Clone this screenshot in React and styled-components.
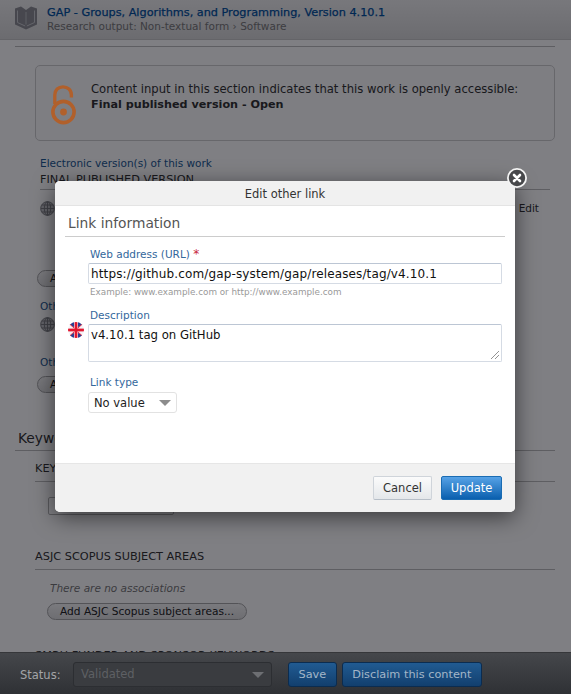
import React from "react";
import styled, { createGlobalStyle } from "styled-components";

const Global = createGlobalStyle`
  html, body { margin: 0; padding: 0; height: 100%; }
  body { font-family: "DejaVu Sans", "Liberation Sans", sans-serif; background: #fff; overflow: hidden; }
  * { box-sizing: border-box; }
`;

const BookIcon = () => (
  <svg width="22" height="24" viewBox="0 0 22 24">
    <path fill="#8e8f94" d="M0 2.5 L6 0.5 L11 4 L16 0.5 L22 2.5 V18.5 L11 23.5 L0 18.5 Z" />
    <path fill="none" stroke="#c9cace" strokeWidth="1" d="M2.5 4.5 L2.5 16.5 L10.2 20 M19.5 4.5 V16.5 L11.8 20" />
    <path fill="none" stroke="#c9cace" strokeWidth="0.8" d="M11 6 V18.5" />
  </svg>
);

const OpenAccessIcon = () => (
  <svg width="25" height="40" viewBox="0 0 25 40">
    <path fill="none" stroke="#b1602b" strokeWidth="3.3" d="M3.8 19 V10 C3.8 5 7.3 1.8 12 1.8 C16.7 1.8 20.4 5 20.4 10 V12.4" />
    <circle cx="12.5" cy="27" r="10.6" fill="none" stroke="#b1602b" strokeWidth="3.6" />
    <circle cx="12.5" cy="27" r="3.4" fill="#b1602b" />
  </svg>
);

const GlobeIcon = () => (
  <svg width="15" height="15" viewBox="0 0 16 16" fill="none" stroke="#7c7d81" strokeWidth="1">
    <circle cx="8" cy="8" r="7.3" fill="#c4c5c8" />
    <ellipse cx="8" cy="8" rx="3.4" ry="7.3" />
    <path d="M1 8 H15 M2 4.3 H14 M2 11.7 H14 M8 1 V15" />
  </svg>
);

const UkFlag = () => (
  <svg width="16" height="16" viewBox="0 0 16 16">
    <clipPath id="flagDisc"><circle cx="8" cy="8" r="8" /></clipPath>
    <g clipPath="url(#flagDisc)">
      <rect width="16" height="16" fill="#f4f4f8" />
      <path fill="#2b3f92" d="M2 2.6 L6 5.2 V0 H4 Z M14 2.6 L10 5.2 V0 H12 Z M2 13.4 L6 10.8 V16 H4 Z M14 13.4 L10 10.8 V16 H12 Z" />
      <path stroke="#e3172f" strokeWidth="0.9" d="M1 1.5 L6 6 M15 1.5 L10 6 M1 14.5 L6 10 M15 14.5 L10 10" />
      <rect x="6.6" width="2.8" height="16" fill="#e3172f" />
      <rect y="6.6" width="16" height="2.8" fill="#e3172f" />
    </g>
  </svg>
);

const CloseIcon = () => (
  <svg width="20" height="20" viewBox="0 0 20 20">
    <circle cx="10" cy="10" r="9.1" fill="#47484b" stroke="#f4f4f4" strokeWidth="1.8" />
    <path stroke="#fff" strokeWidth="2.6" strokeLinecap="round" d="M7 7 L13 13 M13 7 L7 13" />
  </svg>
);

const App = () => (
  <Page>
    <Global />
    <TopBar>
      <BookIcon />
      <TitleBlock>
        <Title>GAP - Groups, Algorithms, and Programming, Version 4.10.1</Title>
        <Subtitle>Research output: Non-textual form › Software</Subtitle>
      </TitleBlock>
    </TopBar>
    <Content>
      <TopRule />
      <Notice>
        <OpenAccessMark>
          <OpenAccessIcon />
        </OpenAccessMark>
        <NoticeText>
          Content input in this section indicates that this work is openly accessible:
          <strong>Final published version - Open</strong>
        </NoticeText>
      </Notice>
      <Section>
        <BlueLabel $mt={15}>Electronic version(s) of this work</BlueLabel>
        <Heading $mt={3} $pb={2} $inset={5}>FINAL PUBLISHED VERSION</Heading>
        <LinkRow $mt={10}>
          <GlobeIcon />
          <EditLink>Edit</EditLink>
        </LinkRow>
        <OutlineButton $mt={54}>Add electronic version...</OutlineButton>
        <BlueLabel $mt={12}>Other link(s)</BlueLabel>
        <LinkRow $mt={3}>
          <GlobeIcon />
        </LinkRow>
        <BlueLabel $mt={23}>Other files</BlueLabel>
        <OutlineButton $mt={7}>Add file...</OutlineButton>
      </Section>
      <KeywordsTitle>Keywords</KeywordsTitle>
      <Section>
        <Heading $mt={11} $inset={0}>KEYWORDS</Heading>
        <KeywordInput />
        <Heading $mt={35} $inset={0}>ASJC SCOPUS SUBJECT AREAS</Heading>
        <Empty>There are no associations</Empty>
        <OutlineButton $ml={12} $mt={8}>Add ASJC Scopus subject areas...</OutlineButton>
        <Heading $mt={29} $inset={0}>SMRU FUNDER AND SPONSOR KEYWORDS</Heading>
      </Section>
    </Content>

    <StatusBar>
      <StatusLabel>Status:</StatusLabel>
      <StatusSelect>
        Validated
        <Caret $color="#6d6f73" $right={7} />
      </StatusSelect>
      <BarButton>Save</BarButton>
      <BarButton>Disclaim this content</BarButton>
    </StatusBar>

    <Overlay />

    <Dialog>
      <CloseButton>
        <CloseIcon />
      </CloseButton>
      <DialogHeader>Edit other link</DialogHeader>
      <DialogBody>
        <BodyTitle>Link information</BodyTitle>
        <Field>
          <FieldLabel>
            Web address (URL) <Required>*</Required>
          </FieldLabel>
          <UrlBox>https://github.com/gap-system/gap/releases/tag/v4.10.1</UrlBox>
          <Hint>Example: www.example.com or http://www.example.com</Hint>
        </Field>
        <Field $mt={10}>
          <FieldLabel>Description</FieldLabel>
          <FlagSpot>
            <UkFlag />
          </FlagSpot>
          <DescriptionBox>
            v4.10.1 tag on GitHub
            <Grip viewBox="0 0 8 8" width="8" height="8">
              <path stroke="#777" strokeWidth="0.8" d="M0 8 L8 0 M4 8 L8 4" />
            </Grip>
          </DescriptionBox>
        </Field>
        <Field $mt={13}>
          <FieldLabel>Link type</FieldLabel>
          <TypeSelect>
            No value
            <Caret $color="#8c8c8c" $right={5} />
          </TypeSelect>
        </Field>
      </DialogBody>
      <DialogFooter>
        <CancelButton>Cancel</CancelButton>
        <UpdateButton>Update</UpdateButton>
      </DialogFooter>
    </Dialog>
  </Page>
);

const Page = styled.div`
  position: relative;
  width: 571px;
  height: 694px;
  overflow: hidden;
  background: #fff;
`;

const TopBar = styled.header`
  height: 40px;
  padding: 6px 0 0 15px;
  display: flex;
  align-items: flex-start;
  gap: 10px;
  background: linear-gradient(#f0f0f0, #d8d8d8);
  border-bottom: 1px solid #c8c8c8;
`;

const TitleBlock = styled.div`
  display: flex;
  flex-direction: column;
`;

const Title = styled.div`
  font-size: 11.25px;
  line-height: 14px;
  color: #00509e;
  -webkit-text-stroke: 0.25px #00509e;
  white-space: nowrap;
`;

const Subtitle = styled.div`
  font-size: 10.5px;
  line-height: 13px;
  color: #7a7a7a;
  white-space: nowrap;
`;

const Content = styled.main`
  padding-left: 15px;
`;

const TopRule = styled.div`
  height: 1px;
  margin-top: 6px;
  width: 540px;
  background: #bdbdbd;
`;

const Notice = styled.div`
  margin: 18px 0 0 20px;
  width: 520px;
  height: 76px;
  padding: 0 0 0 15px;
  display: flex;
  align-items: center;
  gap: 15px;
  background: #fcfcfc;
  border: 1px solid #cfcfcf;
  border-radius: 5px;
`;

const OpenAccessMark = styled.span`
  position: relative;
  z-index: 2;
  display: flex;
  margin-top: 3px;
`;

const NoticeText = styled.div`
  font-size: 11.6px;
  line-height: 15px;
  color: #333;
  margin-top: -13px;
  white-space: nowrap;
  strong {
    display: block;
    font-size: 11.2px;
    font-weight: 700;
  }
`;

const Section = styled.section`
  margin-left: 20px;
  width: 520px;
`;

const BlueLabel = styled.div`
  margin-top: ${(p) => p.$mt}px;
  margin-left: 5px;
  font-size: 10.5px;
  line-height: 14px;
  color: #1d5a92;
`;

const Heading = styled.div`
  margin: ${(p) => p.$mt}px ${(p) => p.$inset}px 0;
  padding-bottom: ${(p) => p.$pb ?? 5}px;
  font-size: 11.3px;
  line-height: 14px;
  color: #333;
  border-bottom: 1px solid #bdbdbd;
  white-space: nowrap;
`;

const LinkRow = styled.div`
  margin-top: ${(p) => p.$mt}px;
  padding: 0 16px 0 5px;
  display: flex;
  align-items: center;
  justify-content: space-between;
  height: 16px;
`;

const EditLink = styled.span`
  font-size: 10.5px;
  color: #333;
`;

const OutlineButton = styled.div`
  width: fit-content;
  margin-top: ${(p) => p.$mt}px;
  margin-left: ${(p) => p.$ml ?? 2}px;
  padding: 0 12px;
  height: 17px;
  line-height: 15px;
  font-size: 10.6px;
  color: #222;
  border: 1px solid #a6a6a6;
  border-radius: 9px;
  background: linear-gradient(#f4f4f4, #dcdcdc);
  white-space: nowrap;
`;

const KeywordsTitle = styled.h2`
  margin: 36px 0 0;
  width: 540px;
  padding: 0 0 3px 3px;
  font-size: 13.8px;
  line-height: 18px;
  font-weight: 400;
  color: #333;
  border-bottom: 1px solid #bdbdbd;
`;

const KeywordInput = styled.div`
  width: 126px;
  height: 18px;
  margin: 15px 0 0 13px;
  border: 1px solid #b5b5b5;
  border-radius: 2px;
  background: #fff;
`;

const Empty = styled.div`
  margin: 12px 0 0 15px;
  font-size: 10.5px;
  line-height: 13px;
  font-style: italic;
  color: #777;
`;

const StatusBar = styled.footer`
  position: absolute;
  z-index: 2;
  left: 0;
  right: 0;
  bottom: 0;
  height: 42px;
  padding: 9px 0 0 20px;
  display: flex;
  align-items: flex-start;
  background: linear-gradient(#45474b, #2f3135);
  border-top: 1px solid #36373a;
`;

const StatusLabel = styled.span`
  font-size: 11.5px;
  line-height: 26px;
  color: #a3a4a7;
  width: 53px;
`;

const StatusSelect = styled.div`
  position: relative;
  width: 199px;
  height: 25px;
  padding-left: 7px;
  margin-right: 16px;
  font-size: 11.5px;
  line-height: 23px;
  color: #5e6064;
  background: #3a3c40;
  border: 1px solid #2c2e32;
  border-radius: 3px;
`;

const Caret = styled.span`
  position: absolute;
  right: ${(p) => p.$right}px;
  top: 50%;
  margin-top: -3px;
  width: 0;
  height: 0;
  border-left: 6px solid transparent;
  border-right: 6px solid transparent;
  border-top: 6px solid ${(p) => p.$color};
`;

const BarButton = styled.div`
  height: 25px;
  margin-right: 5px;
  padding: 0 9.5px;
  font-size: 11.3px;
  line-height: 23px;
  color: #a3b6c8;
  border: 1px solid #0b2c50;
  border-radius: 3px;
  background: linear-gradient(#215b92, #123f6e);
  white-space: nowrap;
`;

const Overlay = styled.div`
  position: absolute;
  inset: 0;
  background: rgba(0, 0, 8, 0.5);
`;

const Dialog = styled.div`
  position: absolute;
  z-index: 3;
  left: 55px;
  top: 181px;
  width: 460px;
  height: 331px;
  display: flex;
  flex-direction: column;
  background: #fff;
  border-radius: 5px;
  box-shadow: 0 5px 22px rgba(0, 0, 0, 0.55);
`;

const CloseButton = styled.div`
  position: absolute;
  top: -13px;
  right: -12px;
  width: 20px;
  height: 20px;
`;

const DialogHeader = styled.div`
  height: 25px;
  padding-top: 1px;
  font-size: 11.5px;
  line-height: 24px;
  text-align: center;
  color: #333;
  background: #f1f1f1;
  border-bottom: 1px solid #e4e4e4;
  border-radius: 5px 5px 0 0;
`;

const DialogBody = styled.div`
  flex: 1;
  padding: 8px 10px 0 10px;
`;

const BodyTitle = styled.h3`
  margin: 0 0 10px;
  padding: 0 0 4px 3px;
  font-size: 13.8px;
  line-height: 18px;
  font-weight: 400;
  color: #555;
  border-bottom: 1px solid #ccc;
`;

const Field = styled.div`
  position: relative;
  margin-top: ${(p) => p.$mt ?? 0}px;
  padding-left: 23px;
`;

const FieldLabel = styled.div`
  padding-left: 2px;
  font-size: 10.5px;
  line-height: 14px;
  color: #33679c;
  margin-bottom: 2px;
`;

const Required = styled.span`
  color: #c8243c;
  font-size: 12px;
  line-height: 10px;
`;

const UrlBox = styled.div`
  width: 414px;
  height: 21px;
  padding-left: 2px;
  font-size: 12px;
  letter-spacing: 0.13px;
  line-height: 20px;
  color: #111;
  border: 1px solid #d5dbe4;
  border-top-color: #bcc6d4;
  border-radius: 2px;
  white-space: nowrap;
`;

const Hint = styled.div`
  margin-top: 3px;
  padding-left: 2px;
  font-size: 8.8px;
  line-height: 11px;
  color: #999;
`;

const FlagSpot = styled.div`
  position: absolute;
  left: 3px;
  top: 14px;
  width: 16px;
  height: 16px;
`;

const DescriptionBox = styled.div`
  position: relative;
  width: 414px;
  height: 38px;
  padding: 1px 0 0 2px;
  font-size: 11.7px;
  line-height: 18px;
  color: #111;
  border: 1px solid #d5dbe4;
  border-top-color: #bcc6d4;
  border-radius: 2px;
`;

const Grip = styled.svg`
  position: absolute;
  right: 2px;
  bottom: 2px;
`;

const TypeSelect = styled.div`
  position: relative;
  width: 89px;
  height: 21px;
  margin-top: 3px;
  padding-left: 5px;
  font-size: 11.5px;
  line-height: 20px;
  color: #222;
  border: 1px solid #e2e2e2;
  border-radius: 3px;
  background: #fff;
`;

const DialogFooter = styled.div`
  height: 49px;
  padding: 12px 13px 0 0;
  display: flex;
  justify-content: flex-end;
  align-items: flex-start;
  gap: 9px;
  background: #f1f1f1;
  border-top: 1px solid #e6e6e6;
  border-radius: 0 0 5px 5px;
`;

const CancelButton = styled.div`
  width: 59px;
  height: 24px;
  font-size: 11.5px;
  line-height: 22px;
  text-align: center;
  color: #333;
  border: 1px solid #cfd4da;
  border-bottom-color: #b7bfc8;
  border-radius: 2px;
  background: linear-gradient(#fbfbfb, #e4e7ea);
`;

const UpdateButton = styled.div`
  width: 61px;
  height: 24px;
  font-size: 11.5px;
  line-height: 22px;
  text-align: center;
  color: #fff;
  border: 1px solid #1a6cb3;
  border-radius: 2px;
  background: linear-gradient(#57a2e6, #0a5fae);
`;

export default App;
